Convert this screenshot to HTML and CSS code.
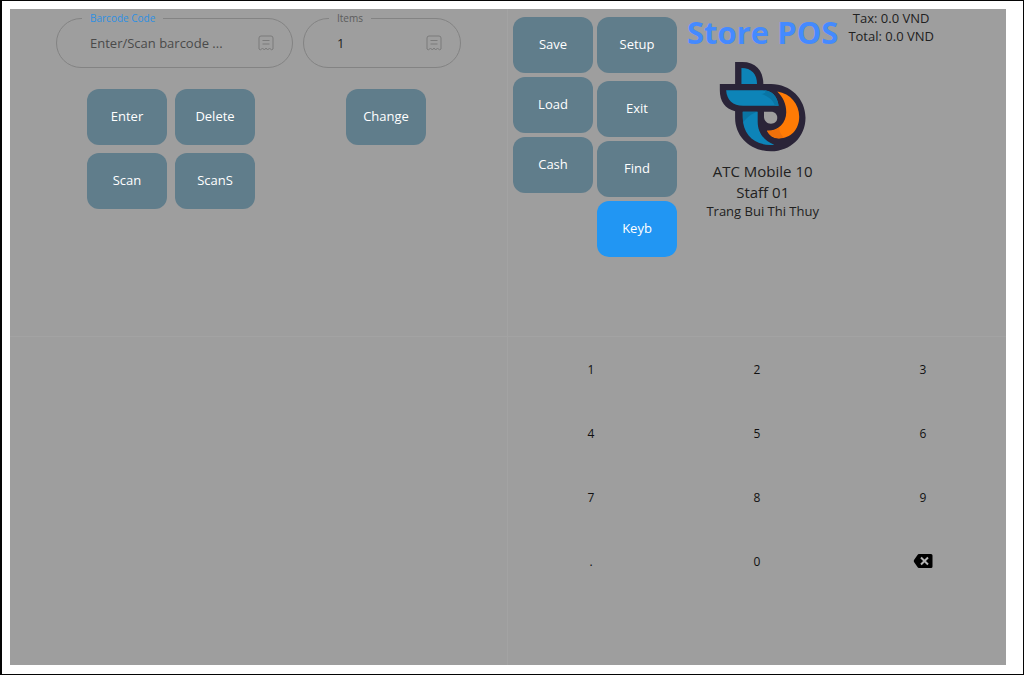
FILE: index.html
```html
<!DOCTYPE html>
<html lang="en">
<head>
<meta charset="utf-8">
<meta name="viewport" content="width=device-width, initial-scale=1">
<title>Store POS</title>
<link rel="stylesheet" href="styles.css">
</head>
<body>
<main class="board">
  <section class="entry" aria-label="Item entry">
    <div class="entry-group barcode-group">
      <fieldset class="field">
        <legend class="legend active"><label for="barcode">Barcode Code</label></legend>
        <div class="field-row">
          <input class="field-input" id="barcode" type="text" placeholder="Enter/Scan barcode ...">
          <svg class="receipt" viewBox="0 0 16 16" aria-hidden="true"><path d="M1 14V3Q1 1 3 1H13Q15 1 15 3V14L13.500 15L11.500 13L9.700 15L8 13L6.300 15L4.500 13L2.500 15Z M4.500 5.500H11.500 M4.500 9H11.500"/></svg>
        </div>
      </fieldset>
      <div class="actions barcode-actions">
        <button class="btn" type="button">Enter</button>
        <button class="btn" type="button">Delete</button>
        <button class="btn" type="button">Scan</button>
        <button class="btn" type="button">ScanS</button>
      </div>
    </div>
    <div class="entry-group items-group">
      <fieldset class="field">
        <legend class="legend"><label for="items">Items</label></legend>
        <div class="field-row">
          <input class="field-input" id="items" type="text" value="1">
          <svg class="receipt" viewBox="0 0 16 16" aria-hidden="true"><path d="M1 14V3Q1 1 3 1H13Q15 1 15 3V14L13.500 15L11.500 13L9.700 15L8 13L6.300 15L4.500 13L2.500 15Z M4.500 5.500H11.500 M4.500 9H11.500"/></svg>
        </div>
      </fieldset>
      <div class="actions items-actions">
        <button class="btn" type="button">Change</button>
      </div>
    </div>
  </section>

  <section class="store" aria-label="Store">
    <div class="stack">
      <button class="btn" type="button">Save</button>
      <button class="btn" type="button">Load</button>
      <button class="btn" type="button">Cash</button>
    </div>
    <div class="stack">
      <button class="btn setup" type="button">Setup</button>
      <button class="btn" type="button">Exit</button>
      <button class="btn" type="button">Find</button>
      <button class="btn selected" type="button">Keyb</button>
    </div>
    <div class="brand">
      <h1 class="title">Store POS</h1>
      <svg class="logo" viewBox="60 33 264 274" role="img" aria-label="Store logo">
        <path fill="#2a2438" d="M108 36H130C168 36 193 60 193 102H216C275 102 320 147 320 204C320 262 275 305 216 305C155 305 108 262 108 204V184C78 178 62 154 62 122V102H108Z"/>
        <path fill="#0d84b8" d="M127 54C157 54 174 72 174 102H127Z"/>
        <path fill="#0d84b8" d="M81 121H190C218 121 235 138 239 168H132C101 168 83 150 81 121Z"/>
        <path fill="#0a75a4" d="M196 121C220 123 235 140 239 168H228C222 151 212 142 188 132Q206 130 196 121Z"/>
        <path fill="#0d84b8" d="M131 186H176V215C176 249 195 274 226 285C169 291 131 255 131 204Z"/>
        <path fill="#0a75a4" d="M131 186H176C161 190 144 202 132 218Z"/>
        <path fill="#ff7b05" d="M235 125C275 132 301 162 301 201C301 240 275 266 240 266C223 266 211 258 204 243C239 243 262 218 262 187C262 162 252 142 235 125Z"/>
        <path fill="#ee700b" d="M204 243Q225 244 241 233Q241 253 256 263Q220 273 204 243Z"/>
        <path fill="#9e9e9e" d="M195 186H216C228 186 235 194 235 204C235 215 227 222 216 222C203 222 195 212 195 201Z"/>
      </svg>
      <p class="device">ATC Mobile 10</p>
      <p class="device">Staff 01</p>
      <p class="person">Trang Bui Thi Thuy</p>
    </div>
    <div class="totals">
      <p>Tax: 0.0 VND</p>
      <p>Total: 0.0 VND</p>
    </div>
  </section>

  <section class="cart" aria-label="Cart"></section>

  <section class="keypad" aria-label="Keypad">
    <button class="key" type="button">1</button>
    <button class="key" type="button">2</button>
    <button class="key" type="button">3</button>
    <button class="key" type="button">4</button>
    <button class="key" type="button">5</button>
    <button class="key" type="button">6</button>
    <button class="key" type="button">7</button>
    <button class="key" type="button">8</button>
    <button class="key" type="button">9</button>
    <button class="key" type="button">.</button>
    <button class="key" type="button">0</button>
    <button class="key" type="button" aria-label="Backspace">
      <svg class="backspace" viewBox="0 0 20 16" aria-hidden="true"><path d="M6 1H18Q19.500 1 19.500 2.500V13.500Q19.500 15 18 15H6Q5 15 4.500 14L1 9Q.5 8 1 7L4.500 2Q5 1 6 1Z"/><path class="cross" d="M8 4.500L15 11.500M15 4.500L8 11.500"/></svg>
    </button>
  </section>
</main>
</body>
</html>
```
FILE: styles.css
```css
* {
  box-sizing: border-box;
}

body {
  margin: 0;
  min-height: 100vh;
  display: flex;
  padding: 8px 17px 9px 8px;
  border: solid #050505;
  border-width: 1px 1px 1px 2px;
  background: #fff;
  color: #212121;
  font-family: "Open Sans", "Noto Sans", sans-serif;
  font-size: 13px;
}

button,
input {
  font: inherit;
}

p,
h1 {
  margin: 0;
}

.board {
  flex: 1;
  display: grid;
  grid-template-columns: minmax(0, 1fr) minmax(0, 1fr);
  grid-template-rows: 1fr 1fr;
  background: #9e9e9e;
}

.entry,
.store {
  border-bottom: 1px solid #a3a3a3;
}

.entry,
.cart {
  border-right: 1px solid #a3a3a3;
}

.entry {
  display: grid;
  grid-template-columns: minmax(0, 3fr) minmax(0, 2fr);
  align-items: start;
  gap: 10px;
  padding: 3px 46px 0;
}

.field {
  min-width: 0;
  margin: 0;
  padding: 0 18px 6px 25px;
  border: 1px solid #838383;
  border-radius: 25px;
}

.legend {
  padding: 0 8px;
  color: #5c5c5c;
  font-size: 10px;
  line-height: 12px;
}

.legend.active {
  color: #2f90e2;
}

.field-row {
  display: flex;
  align-items: center;
  height: 37px;
}

.field-input {
  flex: 1;
  min-width: 0;
  padding: 0 8px;
  border: 0;
  outline: 0;
  background: transparent;
  color: #212121;
}

.field-input::placeholder {
  color: #4a4a4a;
  opacity: 1;
}

.receipt {
  width: 16px;
  height: 16px;
  fill: none;
  stroke: #7b7b7b;
  stroke-linejoin: round;
}

.actions {
  display: flex;
  flex-wrap: wrap;
  gap: 8px;
  padding-top: 21px;
}

.barcode-actions {
  padding-left: 31px;
}

.items-actions {
  padding-left: 43px;
}

.btn {
  width: 80px;
  height: 56px;
  padding: 0 0 2px;
  border: 0;
  border-radius: 12px;
  background: #607d8b;
  color: #fff;
}

.btn.selected {
  background: #2196f3;
}

.store {
  display: flex;
  align-items: flex-start;
  gap: 4px;
  padding-left: 5px;
}

.stack {
  display: flex;
  flex-direction: column;
  gap: 4px;
  padding-top: 8px;
}

.setup {
  margin-bottom: 4px;
}

.brand {
  display: flex;
  flex-direction: column;
  align-items: center;
  padding: 0 6px;
  white-space: nowrap;
}

.title {
  color: #448aff;
  font-size: 31px;
  line-height: 46px;
}

.logo {
  width: 88px;
  height: 91px;
  margin: 6px 0 9px;
}

.device {
  font-size: 15px;
  line-height: 21px;
}

.person {
  line-height: 17px;
}

.totals {
  line-height: 18px;
  text-align: center;
}

.keypad {
  display: grid;
  grid-template-columns: repeat(3, 1fr);
  grid-auto-rows: 64px;
}

.key {
  display: grid;
  place-items: center;
  padding: 0;
  border: 0;
  background: transparent;
  color: #111;
  font-size: 12px;
}

.backspace {
  width: 20px;
  height: 16px;
}

.cross {
  fill: none;
  stroke: #b4b4b4;
  stroke-width: 2;
}
```
